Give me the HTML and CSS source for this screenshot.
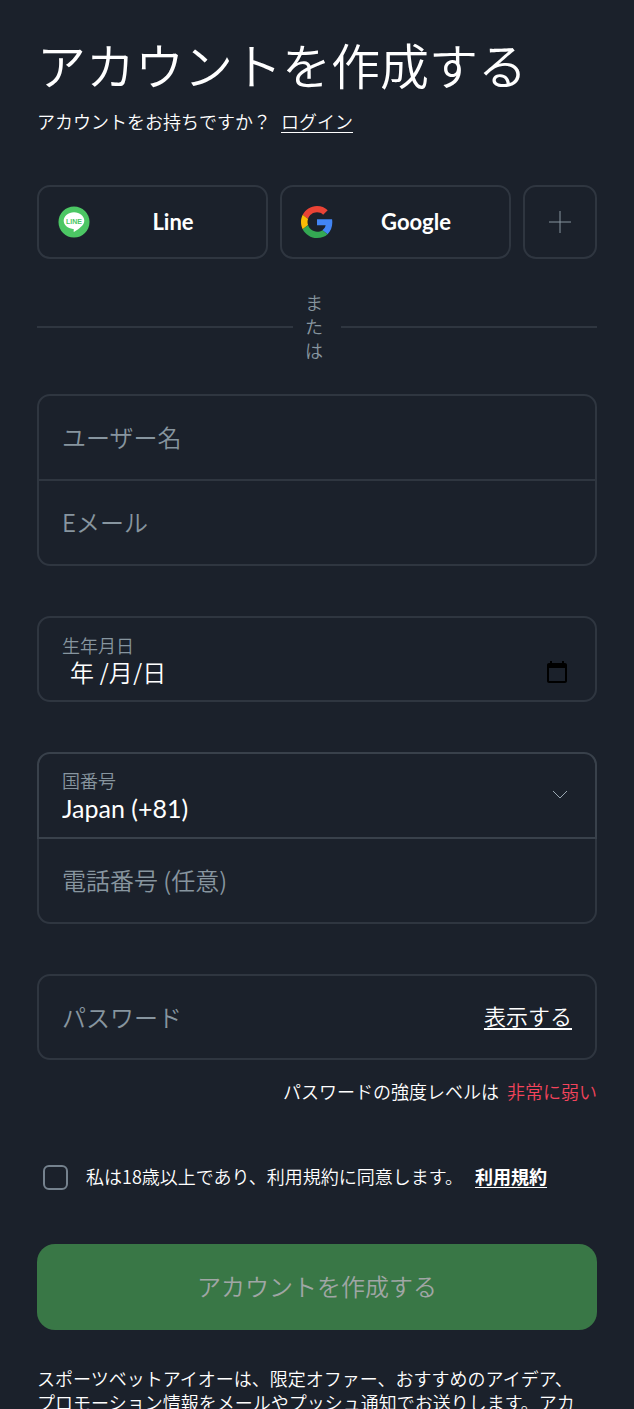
FILE: index.html
```html
<!DOCTYPE html>
<html lang="ja">
<head>
    <meta charset="UTF-8">
    <meta name="viewport" content="width=device-width, initial-scale=1.0">
    <title>アカウントを作成する</title>
    <link rel="stylesheet" href="styles.css">
</head>
<body>
    <main class="signup">
        <h1 class="title">アカウントを作成する</h1>
        <p class="subtitle"><span>アカウントをお持ちですか？</span><a href="#login">ログイン</a></p>

        <form class="form">
            <div class="socials">
                <button type="button" class="social">
                    <svg class="social-icon" viewBox="0 0 32 32" aria-hidden="true">
                        <circle cx="16" cy="16" r="15.5" fill="#4cc764"/>
                        <path fill="#fff" d="M16 6.3c5.7 0 10.3 3.8 10.3 8.4 0 2.5-1.5 4.5-3.6 6.4-2 1.9-4.6 3.7-6.4 4.6-.8.4-.8-.1-.7-.6l.2-1.3c.1-.6-.2-.8-.9-.9-5.2-.7-9.2-4-9.2-8.2 0-4.6 4.6-8.4 10.3-8.4z"/>
                        <text x="16" y="17.5" text-anchor="middle" class="line-mark">LINE</text>
                    </svg>
                    <span class="social-name">Line</span>
                </button>
                <button type="button" class="social">
                    <svg class="social-icon" viewBox="0 0 48 48" aria-hidden="true">
                        <path fill="#ea4335" d="M24 9.5c3.54 0 6.71 1.22 9.21 3.6l6.85-6.85C35.9 2.38 30.47 0 24 0 14.62 0 6.51 5.38 2.56 13.22l7.98 6.19C12.43 13.72 17.74 9.5 24 9.5z"/>
                        <path fill="#4285f4" d="M46.98 24.55c0-1.57-.15-3.09-.38-4.55H24v9.02h12.94c-.58 2.96-2.26 5.48-4.78 7.18l7.73 6c4.51-4.18 7.09-10.36 7.09-17.65z"/>
                        <path fill="#fbbc05" d="M10.53 28.59c-.48-1.45-.76-2.99-.76-4.59s.27-3.14.76-4.59l-7.98-6.19C.92 16.46 0 20.12 0 24c0 3.88.92 7.54 2.56 10.78l7.97-6.19z"/>
                        <path fill="#34a853" d="M24 48c6.48 0 11.93-2.13 15.89-5.81l-7.73-6c-2.15 1.45-4.92 2.3-8.16 2.3-6.26 0-11.57-4.22-13.47-9.91l-7.98 6.19C6.51 42.62 14.62 48 24 48z"/>
                    </svg>
                    <span class="social-name">Google</span>
                </button>
                <button type="button" class="social-more" aria-label="その他">
                    <svg class="plus-icon" viewBox="0 0 24 24" aria-hidden="true">
                        <path d="M12 1v22M1 12h22"/>
                    </svg>
                </button>
            </div>

            <div class="divider"><span>または</span></div>

            <div class="group">
                <div class="field">
                    <input type="text" class="text-input" placeholder="ユーザー名" aria-label="ユーザー名">
                </div>
                <div class="field">
                    <input type="email" class="text-input" placeholder="Eメール" aria-label="Eメール">
                </div>
            </div>

            <div class="group">
                <div class="field">
                    <div class="stack">
                        <label for="birthday">生年月日</label>
                        <input type="text" id="birthday" class="date-input" placeholder="年 /月/日">
                    </div>
                    <button type="button" class="calendar" aria-label="カレンダー">
                        <svg viewBox="0 0 24 24" aria-hidden="true">
                            <path d="M20 3h-1V1h-2v2H7V1H5v2H4c-1.1 0-2 .9-2 2v16c0 1.1.9 2 2 2h16c1.1 0 2-.9 2-2V5c0-1.1-.9-2-2-2zm0 18H4V8h16v13z"/>
                        </svg>
                    </button>
                </div>
            </div>

            <div class="group">
                <div class="field active">
                    <div class="stack">
                        <label for="country">国番号</label>
                        <select id="country">
                            <option>Japan (+81)</option>
                        </select>
                    </div>
                    <svg class="chevron" viewBox="0 0 16 10" aria-hidden="true">
                        <path d="M1 1l7 7 7-7"/>
                    </svg>
                </div>
                <div class="field">
                    <input type="tel" class="text-input" placeholder="電話番号 (任意)" aria-label="電話番号 (任意)">
                </div>
            </div>

            <div class="group">
                <div class="field">
                    <input type="password" class="text-input" placeholder="パスワード" aria-label="パスワード">
                    <button type="button" class="show">表示する</button>
                </div>
            </div>
            <p class="strength"><span>パスワードの強度レベルは</span><span class="weak">非常に弱い</span></p>

            <div class="terms">
                <input type="checkbox" id="agree">
                <label for="agree">私は18歳以上であり、利用規約に同意します。</label>
                <a href="#terms">利用規約</a>
            </div>

            <button type="submit" class="submit" disabled>アカウントを作成する</button>
        </form>

        <p class="note">スポーツベットアイオーは、限定オファー、おすすめのアイデア、<br>プロモーション情報をメールやプッシュ通知でお送りします。アカ</p>
    </main>
</body>
</html>
```
FILE: styles.css
```css
* {
    box-sizing: border-box;
}
body {
    margin: 0;
    height: 100vh;
    overflow: hidden;
    background-color: #1b212b;
    color: #fff;
    font-family: 'Noto Sans CJK JP', sans-serif;
    font-size: 18px;
    font-weight: 350;
    line-height: 24px;
}
button, input, select {
    margin: 0;
    padding: 0;
    border: none;
    background: none;
    color: inherit;
    font: inherit;
}
button {
    cursor: pointer;
}
a {
    color: #fff;
    text-underline-offset: 3px;
}
.signup {
    padding: 34px 37px 0;
}
.title {
    margin: 0;
    font-size: 49px;
    font-weight: 350;
    line-height: 60px;
}
.subtitle {
    display: flex;
    gap: 10px;
    margin: 15px 0 0;
}
.form {
    margin-top: 52px;
}
.socials {
    display: grid;
    grid-template-columns: 1fr 1fr 74px;
    gap: 12px;
}
.social, .social-more {
    display: flex;
    align-items: center;
    height: 74px;
    border: 2px solid #2f3640;
    border-radius: 13px;
}
.social {
    padding: 0 10px 0 19px;
}
.social-more {
    justify-content: center;
}
.social-icon {
    width: 32px;
    height: 32px;
}
.social-name {
    flex: 1;
    font-family: Lato, sans-serif;
    font-size: 22px;
    font-weight: 700;
    text-align: center;
}
.line-mark {
    fill: #4cc764;
    font-family: 'Liberation Sans', sans-serif;
    font-size: 7px;
    font-weight: 700;
}
.plus-icon {
    width: 24px;
    height: 24px;
    fill: none;
    stroke: #87959f;
}
.divider {
    display: flex;
    align-items: center;
    gap: 12px;
    margin: 31px 0 32px;
    color: #87959f;
}
.divider::before, .divider::after {
    content: '';
    flex: 1;
    height: 2px;
    background-color: #2f3640;
}
.divider span {
    width: 24px;
    padding: 0 6px 2px 0;
}
.divider {
    margin-bottom: 30px;
}
.group {
    margin-bottom: 50px;
}
.field {
    display: flex;
    align-items: center;
    height: 87px;
    padding: 0 23px;
    border: 2px solid #2f3640;
    font-size: 24px;
}
.field:only-child {
    height: 86px;
}
.field:first-child {
    border-top-left-radius: 13px;
    border-top-right-radius: 13px;
}
.field:last-child {
    border-bottom-left-radius: 13px;
    border-bottom-right-radius: 13px;
}
.field + .field {
    margin-top: -2px;
}
.field.active {
    position: relative;
    z-index: 1;
    border-color: #39414b;
}
.text-input {
    flex: 1;
    min-width: 0;
    height: 100%;
    padding-bottom: 2px;
    outline: none;
}
.text-input::placeholder {
    color: #87959f;
    opacity: 1;
}
.stack {
    display: flex;
    flex: 1;
    flex-direction: column;
    min-width: 0;
}
.stack label {
    color: #87959f;
    font-size: 18px;
    line-height: 24px;
}
.date-input {
    height: 28px;
    padding-left: 8px;
    outline: none;
}
.date-input::placeholder {
    color: #fff;
    opacity: 1;
}
.calendar {
    display: flex;
    align-self: flex-end;
    padding: 0 3px 16px 0;
}
.calendar svg {
    width: 24px;
    height: 24px;
}
select {
    height: 32px;
    appearance: none;
    outline: none;
    font-family: Lato, sans-serif;
    font-size: 25px;
    font-weight: 400;
    line-height: 32px;
}
.chevron {
    width: 16px;
    height: 10px;
    margin: 0 4px 2px 0;
    fill: none;
    stroke: #9aa8b2;
}
.show {
    padding-bottom: 4px;
    font-size: 22px;
    text-decoration: underline;
    text-underline-offset: 3px;
}
.strength {
    display: flex;
    justify-content: flex-end;
    gap: 8px;
    margin: -31px 0 0;
}
.weak {
    color: #f3445c;
}
.terms {
    display: flex;
    align-items: center;
    margin-top: 61px;
    padding-left: 6px;
}
.terms input {
    width: 25px;
    height: 25px;
    margin-right: 18px;
    border: 2px solid #75828e;
    border-radius: 6px;
    appearance: none;
}
.terms label, .terms a {
    padding-bottom: 2px;
}
.terms a {
    margin-left: 12px;
    font-weight: 700;
}
.submit {
    width: 100%;
    height: 86px;
    margin-top: 54px;
    padding-bottom: 3px;
    border-radius: 18px;
    background-color: #397746;
    color: #a0a6a5;
    font-size: 24px;
}
.note {
    margin: 36px 0 0;
}
```
